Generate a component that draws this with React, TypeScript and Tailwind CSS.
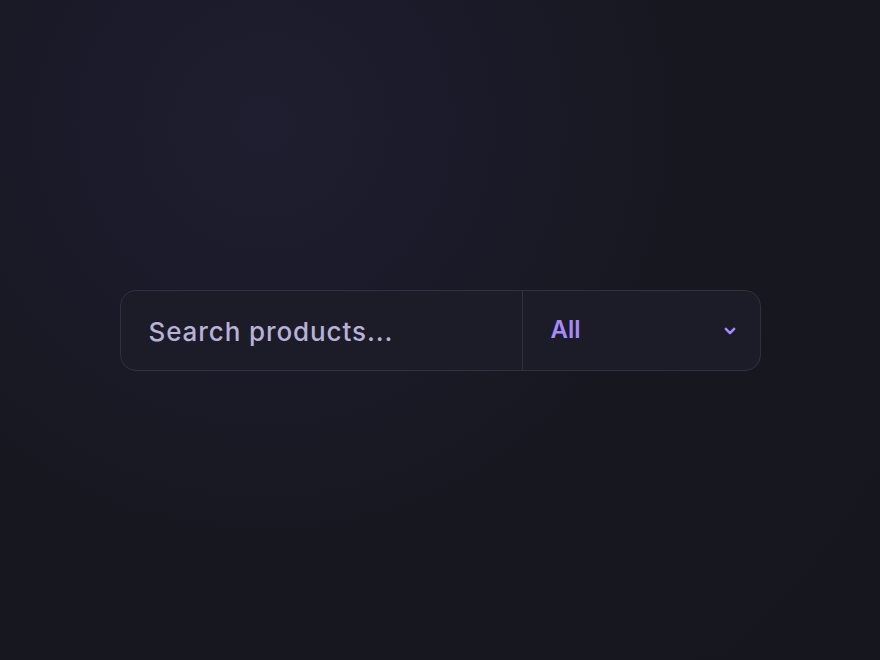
import React from "react";

export default function App() {
  return (
    <div
      className="w-[880px] h-[660px] flex items-center justify-center bg-[#16161f]"
      style={{
        fontFamily: "Inter, 'Noto Sans', sans-serif",
        background:
          "radial-gradient(circle at 30% 19%, #1f1e30 0%, #1b1a29 25%, #17171f 55%, #16161f 100%)",
      }}
    >
      <div className="w-[641px] h-[81px] flex rounded-2xl border border-[#31303f] bg-[#1c1b28] overflow-hidden">
        <div className="w-[401px] flex items-center pl-7">
          <input
            placeholder="Search products..."
            className="w-full bg-transparent outline-none text-[26px] font-medium tracking-[0.9px] text-[#b8b2d6] placeholder:text-[#b8b2d6] mt-[3px]"
          />
        </div>
        <div className="flex-1 flex items-center justify-between border-l border-[#31303f] pl-7 pr-5">
          <span className="text-[24px] font-semibold text-[#a78bfa]">All</span>
          <svg className="mt-[2px]" width="20" height="20" viewBox="0 0 24 24" fill="none" stroke="#a78bfa" strokeWidth="3" strokeLinecap="round" strokeLinejoin="round">
            <path d="m7 9.5 5 5 5-5" />
          </svg>
        </div>
      </div>
    </div>
  );
}
